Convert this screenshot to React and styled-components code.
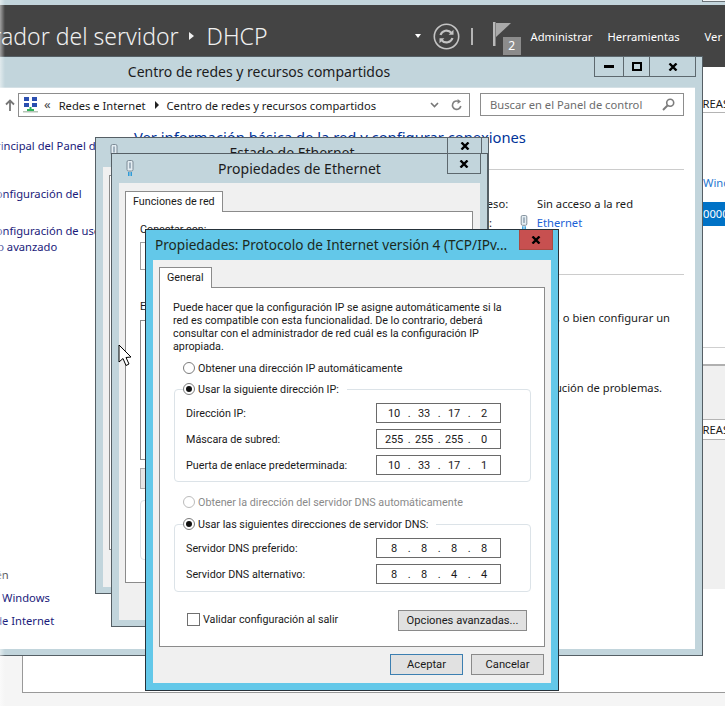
import React from 'react';
import styled, { createGlobalStyle } from 'styled-components';

const GlobalStyle = createGlobalStyle`
  html, body { margin: 0; padding: 0; background: #f5f5f5; }
  body { font-family: "Noto Sans", "Open Sans", sans-serif; font-size: 11.2px; color: #1a1a1a; }
  * { box-sizing: border-box; }
`;

const Desktop = styled.div`
  position: relative;
  width: 725px;
  height: 706px;
  overflow: hidden;
  background: #f5f5f5;
`;

const LeftFade = styled.div`
  position: absolute;
  left: 0;
  top: 0;
  bottom: 0;
  width: 5px;
  background: linear-gradient(to right, rgba(255, 255, 255, 0.5), rgba(255, 255, 255, 0));
  z-index: 10;
`;

/* server manager behind the windows */
const TopStrip = styled.div`
  display: flex;
  justify-content: flex-end;
  height: 5px;
  background: #c3d5dc;
`;

const TopStripTab = styled.div`
  width: 23px;
  height: 2px;
  border-left: 1px solid #6b7378;
  border-bottom: 1px solid #6b7378;
  background: #f2f5f6;
`;

const HeaderBar = styled.div`
  display: flex;
  align-items: center;
  height: 62px;
  padding-right: 3px;
  background: #444444;
  color: #fff;
`;

const Breadcrumb = styled.div`
  display: flex;
  align-items: center;
  margin-left: -99px;
  margin-right: auto;
  font-size: 23px;
  font-weight: 300;
  white-space: nowrap;
  color: #f0f0f0;
`;

const CrumbArrow = styled.span`
  width: 0;
  height: 0;
  margin: 0 13px 0 10px;
  border-left: 5px solid #f0f0f0;
  border-top: 4px solid transparent;
  border-bottom: 4px solid transparent;
`;

const DropCaret = styled.span`
  width: 0;
  height: 0;
  border-top: 4px solid #fff;
  border-left: 3px solid transparent;
  border-right: 3px solid transparent;
`;

const Separator = styled.span`
  width: 2px;
  height: 17px;
  margin: 0 20px 0 11px;
  background: #b5b5b5;
`;

const FlagBox = styled.div`
  position: relative;
  width: 38px;
  height: 26px;
  margin-top: -3px;
`;

const Badge = styled.span`
  position: absolute;
  left: 10px;
  top: 15px;
  width: 18px;
  height: 18px;
  display: flex;
  align-items: center;
  justify-content: center;
  background: #8c8c8c;
  color: #fff;
  font-size: 12px;
`;

const MenuItem = styled.span`
  margin-left: ${p => p.$gap}px;
  color: #fff;
  font-size: 11.2px;
  white-space: nowrap;
`;

const ManagerBody = styled.div`
  display: flex;
  flex-direction: column;
`;

const ManagerPane = styled.div`
  display: flex;
  flex-direction: column;
  height: 588px;
  padding-top: 30px;
  padding-left: 703px;
  background: #fff;
  overflow: hidden;
  white-space: nowrap;
`;

const TaskRow = styled.div`
  height: ${p => p.$h}px;
  text-indent: -13px;
  line-height: ${p => p.$h - 2}px;
  border-bottom: 1px solid #b4b4b4;
  border-top: ${p => (p.$top ? '1px solid #b4b4b4' : 'none')};
  background: #fff;
  color: #1a1a1a;
`;

const PaneLink = styled.div`
  margin-top: 62px;
  line-height: 16px;
  color: #1f78d1;
`;

const SelectedRow = styled.div`
  height: 24px;
  margin-top: 11px;
  line-height: 24px;
  background: #0072c6;
  color: #fff;
`;

const PaneRule = styled.div`
  height: 1px;
  margin-top: 121px;
  background: #cfcfcf;
`;

const PaneGray = styled.div`
  height: ${p => p.$h}px;
  margin-top: ${p => p.$top}px;
  background: #f0f0f0;
  border-top: ${p => (p.$line ? '2px solid #b0b0b0' : 'none')};
`;

const BottomPanel = styled.div`
  height: 38px;
  margin-left: 22px;
  background: #fff;
  border-left: 1px solid #999;
  border-bottom: 1px solid #999;
`;

/* windows */
const Window = styled.div`
  position: absolute;
  left: ${p => p.$x}px;
  top: ${p => p.$y}px;
  width: ${p => p.$w}px;
  height: ${p => p.$h}px;
  display: flex;
  flex-direction: column;
  background: ${p => p.$accent || '#c2d5dc'};
  border: 1px solid ${p => p.$edge || '#555f65'};
  padding: 0 7px ${p => p.$bottom || 6}px;
`;

const TitleBar = styled.div`
  display: grid;
  grid-template-columns: 1fr auto 1fr;
  height: ${p => p.$h || 30}px;
  flex: none;
  margin: 0 -7px;
  padding: 0 6px;
`;

const TitleIcon = styled.div`
  padding: 6px 0 0 8px;
`;

const TitleText = styled.div`
  font-size: 14px;
  line-height: 30px;
  white-space: nowrap;
  color: #1c1c1c;
`;

const Controls = styled.div`
  display: flex;
  justify-self: end;
  align-self: start;
  height: ${p => p.$h}px;
  margin-top: -1px;
  border: 1px solid #5d686e;
`;

const ControlButton = styled.div`
  width: ${p => p.$w}px;
  display: flex;
  align-items: center;
  justify-content: center;
  & + & {
    border-left: 1px solid #5d686e;
  }
`;

const MainContent = styled.div`
  flex: 1;
  min-height: 0;
  display: flex;
  flex-direction: column;
  background: #fff;
  border-top: 1px solid #d4e0e5;
`;

const Toolbar = styled.div`
  display: flex;
  gap: 10px;
  flex: none;
  padding: 5px 11px 0 179px;
`;

const UpButton = styled.div`
  width: 16px;
  margin-right: -10px;
  display: flex;
  align-items: center;
  justify-content: center;
`;

const AddressBox = styled.div`
  flex: 1;
  height: 24px;
  display: flex;
  align-items: center;
  padding: 0 6px 0 4px;
  border: 1px solid #8d8d8d;
  white-space: nowrap;
`;

const AddressChevrons = styled.span`
  margin: -2px 8px 0 6px;
  color: #444;
  font-size: 13px;
`;

const CrumbDivider = styled.span`
  width: 0;
  height: 0;
  margin: 0 8px 0 9px;
  border-left: 4px solid #222;
  border-top: 4px solid transparent;
  border-bottom: 4px solid transparent;
`;

const AddressTools = styled.div`
  display: flex;
  align-items: center;
  gap: 12px;
  margin-left: auto;
`;

const SearchBox = styled.div`
  width: 204px;
  height: 23px;
  display: flex;
  align-items: center;
  justify-content: space-between;
  padding: 0 8px 0 9px;
  border: 1px solid #8d8d8d;
  color: #6d6d6d;
  white-space: nowrap;
`;

const MainColumns = styled.div`
  flex: 1;
  min-height: 0;
  display: flex;
`;

const NavColumn = styled.div`
  width: 311px;
  flex: none;
  display: flex;
  flex-direction: column;
  padding: 21px 0 20px 120px;
`;

const NavLink = styled.div`
  width: 165px;
  margin-top: ${p => p.$top || 0}px;
  line-height: 16px;
  color: ${p => (p.$muted ? '#555' : '#1a1a7a')};
`;

const NavFooter = styled.div`
  margin-top: auto;
  display: flex;
  flex-direction: column;
  gap: 7px;
`;

const ContentColumn = styled.div`
  flex: 1;
  padding-right: 11px;
`;

const PageHeading = styled.h1`
  margin: 8px 0 0;
  font-size: 14.75px;
  line-height: 24px;
  font-weight: 400;
  white-space: nowrap;
  color: #003399;
`;

const Rule = styled.div`
  height: 1px;
  margin-top: ${p => p.$top}px;
  background: #cccccc;
`;

const InfoGrid = styled.div`
  display: grid;
  grid-template-columns: 92px 1fr;
  grid-auto-rows: 19px;
  align-items: center;
  margin: 24px 0 0 294px;
  white-space: nowrap;
`;

const InfoValue = styled.div`
  display: flex;
  align-items: center;
  gap: 3px;
  padding-left: ${p => p.$indent || 0}px;
`;

const EthernetLink = styled.span`
  color: #1a62d6;
`;

const SettingLine = styled.div`
  margin-top: ${p => p.$top}px;
  padding-right: ${p => p.$right}px;
  text-align: right;
  line-height: 16px;
  white-space: nowrap;
  color: #1a1a1a;
`;

/* dialog content uses the narrower classic control text */
const DialogBody = styled.div`
  flex: 1;
  min-height: 0;
  display: flex;
  flex-direction: column;
  background: #f0f0f0;
  padding: ${p => p.$pad};
  font-family: Roboto, "Noto Sans", sans-serif;
  font-size: 10.75px;
`;

const Tab = styled.div`
  align-self: flex-start;
  position: relative;
  z-index: 1;
  height: 21px;
  margin-bottom: -1px;
  padding: 0 7px;
  line-height: 20px;
  background: #fff;
  border: 1px solid #8b8b8b;
  border-bottom: none;
`;

const TabPanel = styled.div`
  display: flex;
  flex-direction: column;
  flex: 1;
  min-height: 0;
  background: #fff;
  border: 1px solid #8b8b8b;
  padding: ${p => p.$pad};
`;

const FieldCaption = styled.div`
  line-height: 16px;
  margin-top: ${p => p.$top}px;
  white-space: nowrap;
`;

const OutlineBox = styled.div`
  height: ${p => p.$h}px;
  margin-top: ${p => p.$top}px;
  width: ${p => p.$w || 'auto'};
  flex: none;
  background: ${p => p.$fill || '#fff'};
  border: 1px solid ${p => p.$line || '#a0a0a0'};
  border-radius: ${p => p.$round || 0}px;
`;

/* ipv4 dialog */
const IpTitleBar = styled.div`
  display: flex;
  align-items: flex-start;
  justify-content: space-between;
  height: 30px;
  flex: none;
  margin: 0 -7px;
  padding: 0 5px 0 9px;
`;

const IpTitle = styled.div`
  font-size: 13.6px;
  line-height: 30px;
  white-space: nowrap;
  color: #1c2a1c;
`;

const CloseRed = styled.div`
  width: 34px;
  height: 20px;
  display: flex;
  align-items: center;
  justify-content: center;
  background: #c75050;
  border: 1px solid #a94a42;
  border-top: none;
`;

const IpText = styled.p`
  margin: 0;
  line-height: 13px;
  white-space: nowrap;
`;

const RadioRow = styled.div`
  display: flex;
  align-items: center;
  gap: 3px;
  height: 16px;
  margin-top: ${p => p.$top || 0}px;
  margin-left: 10px;
  white-space: nowrap;
  color: ${p => (p.$off ? '#8a8a8a' : 'inherit')};
`;

const RadioDot = styled.span`
  width: 12px;
  height: 12px;
  flex: none;
  display: flex;
  align-items: center;
  justify-content: center;
  border: 1px solid ${p => (p.$off ? '#bbbbbb' : '#7c7c7c')};
  border-radius: 50%;
  background: #fff;
  &::after {
    content: '';
    display: ${p => (p.$on ? 'block' : 'none')};
    width: 6px;
    height: 6px;
    border-radius: 50%;
    background: #111;
  }
`;

const GroupBox = styled.div`
  display: flex;
  flex-direction: column;
  gap: 6px;
  flex: none;
  width: 357px;
  margin: ${p => p.$top}px 0 0 1px;
  padding-bottom: ${p => p.$bottom}px;
  border: 1px solid #dce3e8;
  border-radius: 4px;
`;

const GroupLegend = styled.div`
  align-self: flex-start;
  margin: -9px 0 0 8px;
  padding-right: 8px;
  background: #fff;
  & > div {
    margin-left: 0;
  }
`;

const FieldRow = styled.div`
  display: flex;
  align-items: center;
  justify-content: space-between;
  height: 20px;
  padding: 0 29px 0 11px;
`;

const IpField = styled.div`
  width: 125px;
  height: 20px;
  display: flex;
  align-items: center;
  padding-left: 6px;
  border: 1px solid #6a6a6a;
  font-size: 11px;
  letter-spacing: -0.2px;
`;

const Octet = styled.span`
  width: 22px;
  text-align: center;
`;

const OctetDot = styled.span`
  width: 8px;
  text-align: center;
`;

const FooterRow = styled.div`
  display: flex;
  align-items: center;
  justify-content: space-between;
  margin-top: 18px;
  padding: 0 4px 0 14px;
`;

const CheckLabel = styled.label`
  display: flex;
  align-items: center;
  gap: 3px;
  margin-top: -3px;
`;

const CheckSquare = styled.span`
  width: 13px;
  height: 13px;
  border: 1px solid #707070;
  background: #fff;
`;

const WinButton = styled.div`
  width: ${p => p.$w}px;
  height: 21px;
  display: flex;
  align-items: center;
  justify-content: center;
  background: #e1e1e1;
  border: 1px solid ${p => (p.$primary ? '#3c7fb1' : '#8a8a8a')};
  white-space: nowrap;
  font-size: 11.2px;
`;

const ButtonRow = styled.div`
  display: flex;
  justify-content: flex-end;
  gap: 8px;
  flex: none;
  padding: 7px 1px 0 0;
`;

const PointerIcon = styled.svg`
  position: absolute;
  left: 118px;
  top: 344px;
  z-index: 20;
`;

const CloseGlyph = () => (
  <svg width="10" height="8" viewBox="0 0 10 8">
    <path d="M1.5 0.5 L8.5 7.5 M8.5 0.5 L1.5 7.5" stroke="#000" strokeWidth="2.4" fill="none" />
  </svg>
);

const PlugIcon = ({ h = 16 }) => (
  <svg width="8" height={h} viewBox="0 0 8 16">
    <rect x="1" y="0.5" width="6" height="10.5" rx="1.5" fill="#e4edf2" stroke="#7c8a96" />
    <rect x="3" y="2.5" width="2" height="6" fill="#9fb0bd" />
    <rect x="2" y="12" width="1.5" height="4" fill="#2f9bd8" />
    <rect x="4.5" y="12" width="1.5" height="4" fill="#2f9bd8" />
  </svg>
);

const NetworkIcon = () => (
  <svg width="15" height="16" viewBox="0 0 15 16">
    <rect x="1" y="0" width="5" height="4" fill="#2b4fb0" />
    <rect x="9" y="0" width="5" height="4" fill="#2b4fb0" />
    <rect x="1" y="6" width="5" height="4" fill="#2b4fb0" />
    <rect x="9" y="6" width="5" height="4" fill="#2b4fb0" />
    <rect x="6.5" y="10" width="2" height="2" fill="#2fb35a" />
    <rect x="4" y="12" width="7" height="3" fill="#2fb35a" />
    <rect x="0" y="14" width="15" height="1.5" fill="#b5c4b5" />
  </svg>
);

const SyncIcon = () => (
  <svg width="27" height="27" viewBox="0 0 27 27" fill="none" style={{ marginLeft: 12 }}>
    <circle cx="13.5" cy="13.5" r="12.2" stroke="#c4c4c4" strokeWidth="1.6" />
    <path d="M7.5 12 A6.3 6.3 0 0 1 18.3 9.8" stroke="#c4c4c4" strokeWidth="2.2" />
    <path d="M20.5 6.8 V11.8 H15.6 Z" fill="#c4c4c4" />
    <path d="M19.5 15 A6.3 6.3 0 0 1 8.7 17.2" stroke="#c4c4c4" strokeWidth="2.2" />
    <path d="M6.5 20.2 V15.2 H11.4 Z" fill="#c4c4c4" />
  </svg>
);

const FlagIcon = () => (
  <svg width="18" height="24" viewBox="0 0 18 24">
    <rect x="0" y="0" width="2.5" height="24" fill="#b9b9b9" />
    <path d="M3 1 H18 L3 15 Z" fill="#a9a9a9" />
  </svg>
);

const UpArrow = () => (
  <svg width="10" height="12" viewBox="0 0 10 12" fill="none">
    <path d="M5 12 V2 M1 5.5 L5 1.5 L9 5.5" stroke="#777" strokeWidth="1.8" />
  </svg>
);

const ChevronDown = () => (
  <svg width="9" height="6" viewBox="0 0 9 6" fill="none">
    <path d="M1 1 L4.5 4.5 L8 1" stroke="#777" strokeWidth="1.6" />
  </svg>
);

const RefreshIcon = () => (
  <svg width="12" height="12" viewBox="0 0 12 12" fill="none">
    <path d="M9.8 7 A4.2 4.2 0 1 1 7.5 2.4" stroke="#808080" strokeWidth="1.6" />
    <path d="M6.6 0 L10 2.4 L6.6 5 Z" fill="#808080" />
  </svg>
);

const SearchIcon = () => (
  <svg width="13" height="13" viewBox="0 0 13 13" fill="none">
    <circle cx="8.2" cy="4.8" r="3.5" stroke="#7c7c7c" strokeWidth="1.6" />
    <path d="M5.5 7.5 L1 12" stroke="#7c7c7c" strokeWidth="2" />
  </svg>
);

const IpAddress = ({ parts }) => (
  <IpField>
    {parts.map((part, i) => (
      <React.Fragment key={i}>
        {i > 0 && <OctetDot>.</OctetDot>}
        <Octet>{part}</Octet>
      </React.Fragment>
    ))}
  </IpField>
);

const Radio = ({ on, off, top, children }) => (
  <RadioRow $off={off} $top={top}>
    <RadioDot $on={on} $off={off} />
    {children}
  </RadioRow>
);

const ServerManager = () => (
  <>
    <TopStrip>
      <TopStripTab />
    </TopStrip>
    <HeaderBar>
      <Breadcrumb>
        Administrador del servidor
        <CrumbArrow />
        DHCP
      </Breadcrumb>
      <DropCaret />
      <SyncIcon />
      <Separator />
      <FlagBox>
        <FlagIcon />
        <Badge>2</Badge>
      </FlagBox>
      <MenuItem $gap={0}>Administrar</MenuItem>
      <MenuItem $gap={15}>Herramientas</MenuItem>
      <MenuItem $gap={25}>Ver</MenuItem>
    </HeaderBar>
    <ManagerBody>
      <ManagerPane>
        <TaskRow $h={16}>TAREAS</TaskRow>
        <PaneLink>Windows</PaneLink>
        <SelectedRow>00000</SelectedRow>
        <PaneRule />
        <PaneGray $h={55} $top={16} $line />
        <TaskRow $h={21} $top>TAREAS</TaskRow>
        <PaneGray $h={149} $top={0} />
      </ManagerPane>
      <BottomPanel />
    </ManagerBody>
  </>
);

const NetworkCenter = () => (
  <Window $x={-185} $y={56} $w={888} $h={600}>
    <TitleBar>
      <div />
      <TitleText>Centro de redes y recursos compartidos</TitleText>
      <Controls $h={21}>
        <ControlButton $w={28}>
          <svg width="10" height="3"><rect width="10" height="3" fill="#000" /></svg>
        </ControlButton>
        <ControlButton $w={26}>
          <svg width="10" height="9"><rect x="1" y="1" width="8" height="7" fill="none" stroke="#000" strokeWidth="2" /></svg>
        </ControlButton>
        <ControlButton $w={46}><CloseGlyph /></ControlButton>
      </Controls>
    </TitleBar>
    <MainContent>
      <Toolbar>
        <UpButton><UpArrow /></UpButton>
        <AddressBox>
          <NetworkIcon />
          <AddressChevrons>«</AddressChevrons>
          Redes e Internet
          <CrumbDivider />
          Centro de redes y recursos compartidos
          <AddressTools>
            <ChevronDown />
            <RefreshIcon />
          </AddressTools>
        </AddressBox>
        <SearchBox>
          Buscar en el Panel de control
          <SearchIcon />
        </SearchBox>
      </Toolbar>
      <MainColumns>
        <NavColumn>
          <NavLink>Ventana principal del Panel de control</NavLink>
          <NavLink $top={16}>Cambiar configuración del adaptador</NavLink>
          <NavLink $top={5}>Cambiar configuración de uso compartido avanzado</NavLink>
          <NavFooter>
            <NavLink $muted>Vea también</NavLink>
            <NavLink>Firewall de Windows</NavLink>
            <NavLink>Opciones de Internet</NavLink>
          </NavFooter>
        </NavColumn>
        <ContentColumn>
          <PageHeading>Ver información básica de la red y configurar conexiones</PageHeading>
          <Rule $top={20} />
          <InfoGrid>
            <span>Tipo de acceso:</span>
            <InfoValue $indent={17}>Sin acceso a la red</InfoValue>
            <span>Conexiones:</span>
            <InfoValue>
              <PlugIcon h={15} />
              <EthernetLink>&nbsp;&nbsp;Ethernet</EthernetLink>
            </InfoValue>
          </InfoGrid>
          <Rule $top={42} />
          <SettingLine $top={35} $right={14}>
            Configurar una conexión de banda ancha, de acceso telefónico o VPN, o bien configurar un
          </SettingLine>
          <SettingLine $top={54} $right={22}>
            Diagnosticar y reparar problemas de red u obtener información de solución de problemas.
          </SettingLine>
        </ContentColumn>
      </MainColumns>
    </MainContent>
  </Window>
);

const EthernetStatus = () => (
  <Window $x={95} $y={137} $w={394} $h={457}>
    <TitleBar $h={29}>
      <TitleIcon><PlugIcon /></TitleIcon>
      <TitleText>Estado de Ethernet</TitleText>
      <Controls $h={18}>
        <ControlButton $w={33}><CloseGlyph /></ControlButton>
      </Controls>
    </TitleBar>
    <DialogBody $pad="8px 6px 37px 6px">
      <TabPanel $pad="0" />
    </DialogBody>
  </Window>
);

const EthernetProperties = () => (
  <Window $x={111} $y={153} $w={377} $h={474}>
    <TitleBar $h={29}>
      <TitleIcon><PlugIcon /></TitleIcon>
      <TitleText>Propiedades de Ethernet</TitleText>
      <Controls $h={21}>
        <ControlButton $w={32}><CloseGlyph /></ControlButton>
      </Controls>
    </TitleBar>
    <DialogBody $pad="8px 7px 37px 6px">
      <Tab>Funciones de red</Tab>
      <TabPanel $pad="10px 14px 0">
        <FieldCaption $top={0}>Conectar con:</FieldCaption>
        <OutlineBox $h={28} $top={4} />
        <FieldCaption $top={29}>Esta conexión usa los siguientes elementos:</FieldCaption>
        <OutlineBox $h={140} $top={5} $line="#8b8b8b" />
        <OutlineBox $h={21} $top={8} $w="110px" $fill="#e6e6e6" $line="#adadad" />
        <OutlineBox $h={60} $top={11} $line="#dce3e8" $round={4} />
      </TabPanel>
    </DialogBody>
  </Window>
);

const Ipv4Properties = () => (
  <Window $x={145} $y={229} $w={414} $h={462} $accent="#63c8e9" $edge="#26323a" $bottom={7}>
    <IpTitleBar>
      <IpTitle>Propiedades: Protocolo de Internet versión 4 (TCP/IPv...</IpTitle>
      <CloseRed><CloseGlyph /></CloseRed>
    </IpTitleBar>
    <DialogBody $pad="7px 6px 8px">
      <Tab>General</Tab>
      <TabPanel $pad="13px 13px 0">
        <IpText>
          Puede hacer que la configuración IP se asigne automáticamente si la<br />
          red es compatible con esta funcionalidad. De lo contrario, deberá<br />
          consultar con el administrador de red cuál es la configuración IP<br />
          apropiada.
        </IpText>
        <Radio top={7}>Obtener una dirección IP automáticamente</Radio>
        <GroupBox $top={13} $bottom={6}>
          <GroupLegend>
            <Radio on>Usar la siguiente dirección IP:</Radio>
          </GroupLegend>
          <FieldRow>
            Dirección IP:
            <IpAddress parts={['10', '33', '17', '2']} />
          </FieldRow>
          <FieldRow>
            Máscara de subred:
            <IpAddress parts={['255', '255', '255', '0']} />
          </FieldRow>
          <FieldRow>
            Puerta de enlace predeterminada:
            <IpAddress parts={['10', '33', '17', '1']} />
          </FieldRow>
        </GroupBox>
        <Radio off top={12}>Obtener la dirección del servidor DNS automáticamente</Radio>
        <GroupBox $top={14} $bottom={7}>
          <GroupLegend>
            <Radio on>Usar las siguientes direcciones de servidor DNS:</Radio>
          </GroupLegend>
          <FieldRow>
            Servidor DNS preferido:
            <IpAddress parts={['8', '8', '8', '8']} />
          </FieldRow>
          <FieldRow>
            Servidor DNS alternativo:
            <IpAddress parts={['8', '8', '4', '4']} />
          </FieldRow>
        </GroupBox>
        <FooterRow>
          <CheckLabel>
            <CheckSquare />
            Validar configuración al salir
          </CheckLabel>
          <WinButton $w={129}>Opciones avanzadas...</WinButton>
        </FooterRow>
      </TabPanel>
      <ButtonRow>
        <WinButton $w={73} $primary>Aceptar</WinButton>
        <WinButton $w={73}>Cancelar</WinButton>
      </ButtonRow>
    </DialogBody>
  </Window>
);

export default function App() {
  return (
    <Desktop>
      <GlobalStyle />
      <ServerManager />
      <NetworkCenter />
      <EthernetStatus />
      <EthernetProperties />
      <Ipv4Properties />
      <PointerIcon width="14" height="23" viewBox="0 0 14 23">
        <path d="M1 1 V18 L5 14.5 L8 21.5 L11 20 L8 13.5 L13 13 Z" fill="#fff" stroke="#000" strokeWidth="1" />
      </PointerIcon>
      <LeftFade />
    </Desktop>
  );
}
